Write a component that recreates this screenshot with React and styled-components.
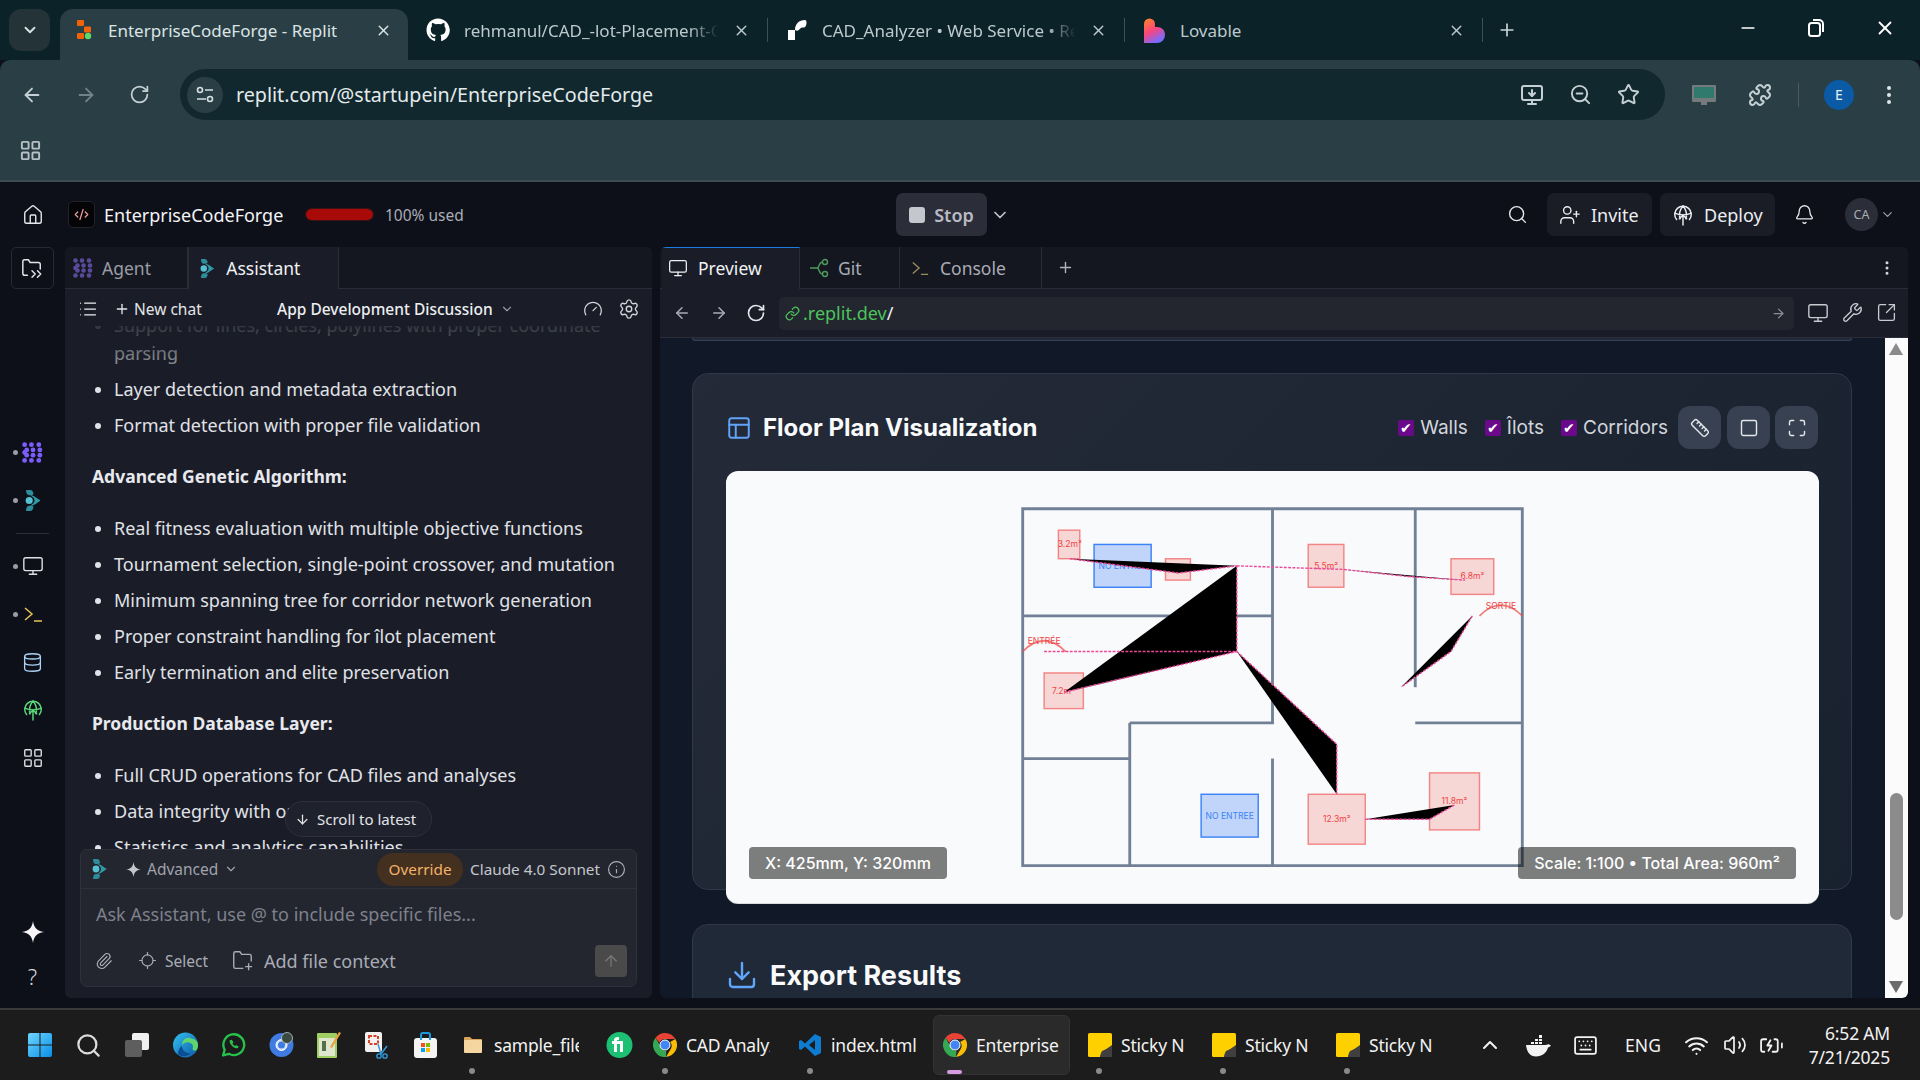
import React from "react";
import styled, { createGlobalStyle } from "styled-components";
import {
  ArrowLeft, ArrowRight, ArrowDown, ArrowUp, RotateCw, Search, ZoomOut, Star, EllipsisVertical, LayoutGrid, X, Plus, Minus,
  ChevronDown, ChevronUp, House, Monitor, Database, Bell, UserPlus, List, Gauge, Settings, Link, Wrench, SquareArrowOutUpRight,
  Ruler, Square, Maximize, PanelsTopLeft, Download, Paperclip, Locate, Info, Keyboard, Wifi, Volume2, Puzzle, CodeXml, MonitorDown, BatteryCharging,
} from "lucide-react";

const Global = createGlobalStyle`
  html, body { margin: 0; padding: 0; width: 1920px; height: 1080px; overflow: hidden; background: #0e1019; }
  * { box-sizing: border-box; }
  #root { width: 1920px; height: 1080px; }
`;

const Screen = styled.div`
  width: 1920px; height: 1080px; display: flex; flex-direction: column; overflow: hidden;
  font-family: "Noto Sans", sans-serif;
`;

/* ---------- browser chrome ---------- */
const TabStrip = styled.div`
  height: 60px; background: #0b2228; display: flex; align-items: flex-end; padding-left: 9px; position: relative; flex: none;
`;
const TabMenu = styled.div`
  width: 41px; height: 42px; margin: 0 10px 9px 0; border-radius: 12px; background: #233338; color: #d7e0e2;
  display: flex; align-items: center; justify-content: center;
`;
const Tab = styled.div`
  width: ${p => p.$w}px; height: 51px; display: flex; align-items: center; flex: none;
  padding: 0 ${p => p.$active ? 16 : 18}px 9px ${p => p.$active ? 17 : 18}px;
  gap: ${p => p.$active ? 16 : 14}px;
  color: ${p => p.$active ? "#dbe4e6" : "#bccacd"};
  background: ${p => p.$active ? "#2a3f45" : "transparent"};
  border-radius: 13px 13px 0 0;
  position: relative;
  ${p => p.$sep && `&::after { content: ""; position: absolute; right: 0; top: 9px; height: 24px; width: 1px; background: #3b5057; }`}
`;
const TabTitle = styled.div`
  flex: 1; min-width: 0; white-space: nowrap; overflow: hidden; font-size: 17px;
  ${p => p.$fade && `-webkit-mask-image: linear-gradient(90deg, #000 88%, transparent 100%); mask-image: linear-gradient(90deg, #000 88%, transparent 100%);`}
`;
const NewTab = styled.div`
  color: #c9d5d8; margin: 0 0 9px 14px; height: 42px; display: flex; align-items: center;
`;
const WindowControls = styled.div`
  margin-left: auto; display: flex; height: 60px; align-items: center; color: #fff; padding: 0 24px 0 0; gap: 50px; transform: translateY(-2px);
`;
const Toolbar = styled.div`
  height: 122px; background: #2a3f45; flex: none; border-radius: 10px 10px 0 0; border-bottom: 2px solid #3d4c52;
  display: flex; flex-direction: column;
`;
const NavRow = styled.div`
  height: 51px; margin-top: 9px; display: flex; align-items: center; padding: 0 0 0 21px; color: #c4d0d3;
`;
const NavBtn = styled.div`
  width: ${p => p.$w || 54}px; flex: none; display: flex; justify-content: ${p => p.$left ? "flex-start" : "center"};
  color: ${p => p.$dim ? "#6f8388" : "inherit"};
`;
const UrlPill = styled.div`
  width: 1485px; height: 51px; margin-left: 18px; flex: none; border-radius: 26px; background: #11282e; display: flex; align-items: center; padding: 0 25px 0 7px;
`;
const SiteBadge = styled.div`
  width: 36px; height: 36px; border-radius: 50%; background: #2a3f45; display: flex; align-items: center; justify-content: center; color: #d5dfe1; flex: none;
`;
const UrlText = styled.div`
  margin-left: 13px; font-size: 19.700px; color: #e3eaec; white-space: nowrap; flex: 1;
`;
const UrlIcons = styled.div`
  display: flex; gap: 25px; align-items: center; color: #c4d0d3;
`;
const ToolIcons = styled.div`
  display: flex; align-items: center; margin-left: 27px;
`;
const ToolGap = styled.span`
  width: ${p => p.$w}px; flex: none;
`;
const ToolSep = styled.div`
  width: 1px; height: 24px; background: #4a5c62; margin: 0 25px 0 26px;
`;
const ChromeAvatar = styled.div`
  width: 30px; height: 30px; border-radius: 50%; background: #0a5aa5; color: #e8f1f8; font-size: 14px; display: flex; align-items: center; justify-content: center;
`;
const BookmarkRow = styled.div`
  flex: 1; display: flex; align-items: center; padding: 0 0 0 19px; color: #b5c1c4;
`;

/* ---------- replit ---------- */
const App_ = styled.div`
  flex: 1; min-height: 0; display: flex; flex-direction: column; background: #0e1019;
`;
const Header = styled.header`
  height: 65px; flex: none; display: flex; align-items: center; position: relative; color: #f0f1f4;
`;
const HomeSlot = styled.div`
  width: 68px; flex: none; display: flex; justify-content: center; color: #e6e7eb; padding-right: 3px;
`;
const LogoBox = styled.div`
  width: 27px; height: 27px; border-radius: 5px; background: #050507; border: 1px solid #22242c; display: flex; align-items: center; justify-content: center; color: #ef9a9a;
`;
const ProjectName = styled.div`
  margin-left: 9px; font-size: 18px; color: #f3f4f6; white-space: nowrap; width: 202px;
`;
const UsageBar = styled.div`
  width: 67px; height: 11px; border-radius: 6px; background: #a80a0a; outline: 1px solid #3a1315;
`;
const UsageText = styled.div`
  margin-left: 12px; font-size: 15.500px; color: #a9acb6; width: 511px; white-space: nowrap;
`;
const StopBtn = styled.div`
  width: 91px; height: 43px; border-radius: 7px; background: #2b2d38; display: flex; align-items: center; justify-content: center; gap: 9px; color: #b9bbc4; font-size: 18px; font-weight: 600;
`;
const StopSquare = styled.div`
  width: 16px; height: 16px; border-radius: 3px; background: #c5c7ce;
`;
const HeadChevron = styled.div`
  margin-left: 3px; color: #c5c7ce; display: flex;
`;
const HeadRight = styled.div`
  margin-left: auto; display: flex; align-items: center; padding-right: 25px;
`;
const HeadBtn = styled.div`
  height: 43px; border-radius: 7px; background: #1a1c26; display: flex; align-items: center; gap: 10px; padding: 0 12px; font-size: 18px; color: #eceef2; margin-left: ${p => p.$ml}px; width: ${p => p.$w}px;
`;
const HeadIcon = styled.div`
  color: #e5e6ea; display: flex; margin-left: ${p => p.$ml || 0}px;
`;
const UserAvatar = styled.div`
  width: 33px; height: 33px; border-radius: 50%; background: #2b2d38; color: #a9acb6; font-size: 12.500px; display: flex; align-items: center; justify-content: center; margin-left: 30px;
`;
const Body = styled.div`
  flex: 1; min-height: 0; display: flex; padding: 0 12px 10px 0;
`;
const Rail = styled.nav`
  width: 65px; flex: none; display: flex; flex-direction: column; align-items: center;
`;
const RailBox = styled.div`
  width: 43px; height: 42px; border: 1px solid #262933; border-radius: 5px; color: #e4e5ea; display: flex; align-items: center; justify-content: center; margin: 0 0 139px -1px;
`;
const RailSlot = styled.div`
  height: ${p => p.$h || 48}px; width: 65px; display: flex; align-items: center; justify-content: center; position: relative; color: ${p => p.$c || "#dfe1e6"};
  ${p => p.$dot && `&::before { content: ""; position: absolute; left: 13px; top: 50%; margin-top: -2px; width: 5px; height: 5px; border-radius: 50%; background: #9a9ca6; }`}
`;
const RailDivider = styled.div`
  width: 33px; height: 1px; background: #2a2c36; margin: 9px 0 8px;
`;
const RailSpacer = styled.div`
  flex: 1;
`;
const HelpMark = styled.span`
  font-size: 22px; font-weight: 300;
`;
const ChatPanel = styled.section`
  width: 587px; flex: none; display: flex; flex-direction: column; background: #1a1d27; border-radius: 6px; overflow: hidden; position: relative;
`;
const TabRow = styled.div`
  height: 42px; flex: none; display: flex; background: #151720; border-bottom: 1px solid #2a2d38; 
`;
const ChatTab = styled.div`
  width: ${p => p.$w}px; height: 42px; display: flex; align-items: center; gap: ${p => p.$gap || 9}px; padding-left: ${p => p.$pl || 8}px; font-size: 17.500px; flex: none;
  color: ${p => p.$active ? "#f0f1f4" : "#9a9ca6"};
  background: ${p => p.$active ? "#1a1d27" : "transparent"};
  border-right: 1px solid #2a2d38;
  ${p => p.$active && `border-left: 1px solid #2a2d38;`}
`;
const ChatHead = styled.div`
  height: 37px; flex: none; display: flex; align-items: center; padding: 3px 12px 0 13px; color: #eceef2;
`;
const NewChat = styled.div`
  display: flex; align-items: center; gap: 4px; font-size: 15.500px; margin-left: 16px; width: 163px; white-space: nowrap; color: #e5e6ea;
`;
const Discussion = styled.div`
  display: flex; align-items: center; gap: 7px; font-size: 15.500px; font-weight: 500; flex: 1; white-space: nowrap; color: #eceef2;
`;
const ChatHeadTools = styled.div`
  display: flex; align-items: center; gap: 15px; color: #d5d6dc;
`;
const Messages = styled.div`
  flex: 1; min-height: 0; overflow: hidden; position: relative; color: #e0e2e8; font-size: 18px; line-height: 28px;
  &::after { content: ""; position: absolute; top: 0; left: 0; right: 0; height: 44px; background: linear-gradient(rgba(26,29,39,0.88), rgba(26,29,39,0.35)); }
`;
const MessageList = styled.ul`
  margin: ${p => p.$mt || 0}px 0 0; padding: 0 0 0 49px; list-style: disc; display: flex; flex-direction: column; gap: 8px;
  li { white-space: nowrap; }
`;
const MessageHeading = styled.p`
  margin: 23px 0 24px 27px; font-weight: 700; font-size: 17.500px; color: #e8e9ee;
`;
const ScrollPill = styled.div`
  position: absolute; left: 220px; top: 554px; width: 147px; height: 36px; border-radius: 18px; background: #1f222c; border: 1px solid #2e313c; display: flex; align-items: center; gap: 7px; padding-left: 9px; color: #e4e5ea; font-size: 15px; white-space: nowrap;
`;
const Composer = styled.div`
  flex: none; height: 138px; margin: 0 15px 11px; background: #23262f; border: 1px solid #2e313c; border-radius: 7px; display: flex; flex-direction: column; position: relative;
`;
const ComposerHead = styled.div`
  height: 39px; flex: none; display: flex; align-items: center; border-bottom: 1px solid #2e313c; padding: 0 10px 0 11px;
`;
const ModeLabel = styled.div`
  display: flex; align-items: center; gap: 6px; color: #9fa2ac; font-size: 15.500px; margin-left: 19px; flex: 1;
`;
const OverridePill = styled.div`
  width: 86px; height: 33px; border-radius: 17px; background: #43301e; color: #f5b269; font-size: 15.300px; display: flex; align-items: center; justify-content: center;
`;
const ModelName = styled.div`
  font-size: 15.300px; color: #c5c7ce; margin: 0 7px; white-space: nowrap;
`;
const Placeholder = styled.div`
  padding: 13px 0 0 15px; color: #7e818c; font-size: 18px; height: 54px; white-space: nowrap;
`;
const ComposerFoot = styled.div`
  flex: 1; display: flex; align-items: center; padding: 0 9px 8px 14px; color: #b0b2bb;
`;
const FootAction = styled.div`
  display: flex; align-items: center; gap: ${p => p.$gap}px; margin-left: ${p => p.$ml}px; font-size: ${p => p.$fs}px; white-space: nowrap; color: #a9acb6;
`;
const SendBtn = styled.div`
  margin-left: auto; width: 32px; height: 32px; background: #4a4a4a; border-radius: 4px; color: #7c7c7c; display: flex; align-items: center; justify-content: center;
`;

const PreviewPanel = styled.section`
  width: 1248px; margin-left: 8px; flex: none; display: flex; flex-direction: column; background: #1a1d27; border-radius: 6px; overflow: hidden; 
`;
const PreviewTabs = styled.div`
  height: 42px; flex: none; display: flex; align-items: center; background: #151720; border-bottom: 1px solid #2a2d38; color: #b7b9c2; padding-left: 2px;
`;
const PTab = styled.div`
  width: ${p => p.$w}px; height: 42px; flex: none; display: flex; align-items: center; gap: ${p => p.$gap}px; padding-left: ${p => p.$pl}px; font-size: 17.500px;
  color: ${p => p.$active ? "#f0f1f4" : "#a9acb6"};
  background: ${p => p.$active ? "#1a1d27" : "transparent"};
  border-right: 1px solid #2a2d38;
  ${p => p.$active && `border-top: 1px solid #1d7ae0;`}
`;
const PTabPlus = styled.div`
  margin-left: 15px; color: #b0b2bb; display: flex;
`;
const PTabMenu = styled.div`
  margin-left: auto; padding-right: 12px; color: #d5d6dc; display: flex;
`;
const AddressRow = styled.div`
  height: 49px; flex: none; display: flex; align-items: center; padding: 0 10px 0 3px; border-bottom: 1px solid #2a2d38; color: #a9acb6;
`;
const AddrNav = styled.div`
  width: 37px; flex: none; display: flex; justify-content: center; color: ${p => p.$c || "inherit"};
`;
const AddressBar = styled.div`
  width: 1015px; height: 33px; border-radius: 5px; background: #23262f; display: flex; align-items: center; padding: 0 8px 0 6px; margin-left: 5px; font-size: 18px; color: #4cc35c;
`;
const LinkGlyph = styled.span`
  display: flex; margin-right: 3px;
`;
const Slash = styled.span`
  color: #eceef2; flex: 1;
`;
const AddrTools = styled.div`
  display: flex; gap: 13px; margin-left: 13px; color: #c9cbd2;
`;
const PreviewBody = styled.div`
  flex: 1; min-height: 0; display: flex; background: #111827; font-family: Inter, sans-serif;
`;
const Page = styled.div`
  flex: 1; min-width: 0; overflow: hidden; padding: 0 33px 0 32px;
`;
const PrevCardEdge = styled.div`
  height: 3px; background: #1f2937; border: 1px solid #374151; border-top: 0; border-radius: 0 0 12px 12px; margin: 0 0 32px;
`;
const Card = styled.div`
  background: linear-gradient(135deg, #242a38, #18212e); border: 1px solid #2f3947; border-radius: 16px; padding: 32px 33px 0 33px; height: 517px; margin-bottom: 34px;
`;
const CardHead = styled.div`
  display: flex; align-items: center; height: 43px; margin-bottom: 22px; color: #fff;
`;
const CardTitle = styled.h2`
  margin: 0; font-family: Inter, sans-serif; font-weight: 700; font-size: ${p => p.$fs}px; color: #f9fafb; flex: 1; margin-left: ${p => p.$ml}px; white-space: nowrap;
`;
const TitleIcon = styled.div`
  color: #60a5fa; display: flex;
`;
const Check = styled.label`
  display: flex; align-items: center; gap: 6px; font-size: 19px; color: #d1d5db; margin-right: ${p => p.$mr}px;
`;
const CheckBox = styled.span`
  width: 16px; height: 16px; background: #6a0a8a; border-radius: 2px; color: #fff; font-size: 14px; display: flex; align-items: center; justify-content: center;
`;
const ToolBtn = styled.div`
  width: 43px; height: 43px; border-radius: 12px; background: #374151; color: #e5e7eb; display: flex; align-items: center; justify-content: center; margin-left: ${p => p.$ml || 0}px;
`;
const Canvas = styled.div`
  height: 432px; margin-right: -1px; border-radius: 12px; background: #f9fafb; display: flex; align-items: center; justify-content: center; position: relative; box-shadow: 0 1px 0 #d8dbe0;
`;
const Badge = styled.div`
  position: absolute; bottom: 24px; ${p => p.$side}: 23px; height: 32px; padding: 0 16px; border-radius: 4px; background: rgba(0,0,0,0.5); color: #fff; font-size: 16px; font-weight: 500; display: flex; align-items: center; white-space: nowrap; font-family: Inter, sans-serif;
`;
const ExportCard = styled.div`
  background: #1f2937; border: 1px solid #2f3947; border-radius: 16px 16px 0 0; height: 110px; padding: 34px 33px 0 33px; display: flex; align-items: flex-start;
`;
const Scrollbar = styled.div`
  width: 23px; flex: none; background: #fbfbfb; position: relative; color: #8b8b8b;
`;
const Thumb = styled.div`
  position: absolute; top: 455px; left: 5px; width: 13px; height: 127px; border-radius: 7px; background: #8b8b8b;
`;
const ScrollArrow = styled.div`
  position: absolute; left: 4px; ${p => p.$pos}: 5px; width: 0; height: 0; border-left: 7.500px solid transparent; border-right: 7.500px solid transparent;
  ${p => p.$pos === "top" ? "border-bottom: 12px solid #8b8b8b;" : "border-top: 12px solid #6b6b6b;"}
`;

/* ---------- taskbar ---------- */
const Taskbar = styled.footer`
  height: 72px; flex: none; background: #1c1c1c; border-top: 2px solid #3a3a3a; display: flex; align-items: center; padding-left: 16px; color: #f2f2f2; position: relative;
`;
const TaskIcon = styled.div`
  width: ${p => p.$w || 48}px; flex: none; display: flex; justify-content: center; align-items: center; color: #e5e5e5;
`;
const TaskApp = styled.div`
  width: ${p => p.$w}px; height: 60px; flex: none; display: flex; align-items: center; gap: ${p => p.$gap || 9}px; padding-left: ${p => p.$pl ?? 14}px; position: relative; margin-left: ${p => p.$ml || 0}px; border-radius: 6px;
  ${p => p.$active && `background: #2a2a2a; border: 1px solid #333;`}
  ${p => p.$dot && `&::after { content: ""; position: absolute; bottom: 1px; left: ${p.$dot}px; width: 6px; height: 6px; border-radius: 50%; background: #8a8a8a; }`}
  ${p => p.$active && `&::after { content: ""; position: absolute; bottom: 0px; left: 13px; width: 15px; height: 4px; border-radius: 2px; background: #d59be0; }`}
`;
const TaskLabel = styled.div`
  width: ${p => p.$w}px; overflow: hidden; white-space: nowrap; font-size: 17.500px; letter-spacing: -0.2px;
`;
const Tray = styled.div`
  margin-left: auto; display: flex; align-items: center; padding-right: 30px;
`;
const TraySlot = styled.div`
  width: ${p => p.$w}px; display: flex; justify-content: center; align-items: center; color: #f2f2f2; font-size: 17.500px;
`;
const Clock = styled.div`
  width: 100px; text-align: right; font-size: 17.500px; line-height: 24px; white-space: nowrap; letter-spacing: -0.2px;
`;

/* ---------- drawings ---------- */
const Star4 = ({ size = 22, color = "#f5f5f7" }) => (
  <svg width={size} height={size} viewBox="0 0 24 24" fill={color}><path d="M12 0c1 7 4 11 12 12-8 1-11 5-12 12-1-7-4-11-12-12 8-1 11-5 12-12z" /></svg>
);
const RestoreIcon = () => (
  <svg width="16" height="18" viewBox="0 0 16 18" fill="none" stroke="currentColor" strokeWidth="2"><rect x="1" y="4" width="11" height="13" rx="2.500" /><path d="M5 1h6a4 4 0 0 1 4 4v8" /></svg>
);
const ReplitFav = () => (
  <svg width="15" height="20" viewBox="0 0 15 20">
    <rect x="0" y="0" width="7" height="6" rx="1" fill="#f26207" />
    <rect x="7" y="6.500" width="7" height="6" rx="1" fill="#f26207" />
    <rect x="0" y="13" width="7" height="6" rx="1" fill="#f26207" />
    <circle cx="11" cy="16" r="3.200" fill="#5dd96a" />
  </svg>
);
const GitHubMark = () => (
  <svg width="24" height="24" viewBox="0 0 24 24" fill="#fff"><path d="M12 .5C5.600.5.500 5.600.500 12c0 5.100 3.300 9.400 7.900 10.900.6.100.8-.3.8-.6v-2.100c-3.200.7-3.900-1.400-3.900-1.400-.5-1.300-1.300-1.700-1.300-1.700-1-.7.1-.7.1-.7 1.200.1 1.800 1.200 1.800 1.200 1 1.800 2.700 1.300 3.400 1 .1-.8.4-1.300.7-1.600-2.600-.3-5.200-1.300-5.200-5.700 0-1.300.5-2.300 1.200-3.100-.1-.3-.5-1.500.1-3.100 0 0 1-.3 3.200 1.200a11 11 0 0 1 5.800 0c2.200-1.500 3.200-1.200 3.200-1.200.6 1.600.2 2.800.1 3.100.7.8 1.200 1.800 1.200 3.100 0 4.400-2.700 5.400-5.300 5.700.4.4.8 1.100.8 2.200v3.200c0 .3.2.7.8.6 4.600-1.500 7.900-5.800 7.900-10.900C23.500 5.600 18.400.5 12 .5z" /></svg>
);
const RenderMark = () => (
  <svg width="22" height="24" viewBox="0 0 22 24" fill="#fff"><path d="M2 22V12h7v10H2zM9 12C9 6 13 2 19 2c2 0 2 5 0 7-1 1-3 0-4 1-2 1-2 4-6 2z" /></svg>
);
const LovableMark = () => (
  <svg width="23" height="25" viewBox="0 0 23 25">
    <defs><linearGradient id="lv" x1="0" y1="0" x2="0.5" y2="1"><stop offset="0" stopColor="#ff8a1f" /><stop offset="0.55" stopColor="#f9457f" /><stop offset="1" stopColor="#7a6bff" /></linearGradient></defs>
    <path d="M1 6a5.500 5.500 0 0 1 11 0v3h3a7.500 7.500 0 0 1 7 8 8 8 0 0 1-8 8H1z" fill="url(#lv)" />
  </svg>
);
const AgentMark = ({ size = 20, color = "#7c5cfc" }) => (
  <svg width={size} height={size} viewBox="0 0 20 20" fill={color}>
    {[[2.500,2.500],[9,2.500],[16,2.500],[4.500,7.500],[10.500,7.500],[17,7.500],[2.500,10],[4.500,12.500],[10.500,12.500],[17,12.500],[2.500,17.500],[9,17.500],[16,17.500]].map(([x,y],i) => <circle key={i} cx={x} cy={y} r="2.300" />)}
  </svg>
);
const AssistMark = ({ size = 20 }) => (
  <svg width={size * 0.75} height={size} viewBox="0 0 15 20">
    <path d="M1 0h4c2 0 3 2 3 4 0 1-3 1-4 1-2 0-3-2-3-5z" fill="#2f8c9b" />
    <path d="M1 20h4c2 0 3-2 3-4 0-1-3-1-4-1-2 0-3 2-3 5z" fill="#2f8c9b" />
    <path d="M5 5c4 0 6 3 10 5-4 2-6 5-10 5 3-2 4-3 4-5s-1-3-4-5z" fill="#2f9aa6" />
    <circle cx="4" cy="10" r="3.400" fill="#56c1d0" />
  </svg>
);
const FolderGo = () => (
  <svg width="22" height="22" viewBox="0 0 24 24" fill="none" stroke="currentColor" strokeWidth="1.600" strokeLinecap="round" strokeLinejoin="round">
    <path d="M7 20H4a2 2 0 0 1-2-2V5a2 2 0 0 1 2-2h4l2 3h9a2 2 0 0 1 2 2v5" /><path d="m12 15 3.500 3.500L12 22M18 15l3.500 3.500L18 22" />
  </svg>
);
const TermMark = ({ size = 20, color = "#e6c45b" }) => (
  <svg width={size} height={size} viewBox="0 0 20 20" fill="none" stroke={color} strokeWidth="1.500"><path d="m2 4 7 6-7 6M11 17h8" /></svg>
);
const DeployMark = ({ size = 22, color = "currentColor" }) => (
  <svg width={size} height={size} viewBox="0 0 24 24" fill="none" stroke={color} strokeWidth="1.600" strokeLinecap="round">
    <path d="M5 17A9 9 0 1 1 19 17" /><path d="M3 10c5 2.500 13 2.500 18 0M9 16c-2-5-1-9 3-14 4 5 5 9 3 14" /><path d="M12 23V12M8 16l4-4 4 4" />
  </svg>
);
const GitMark = () => (
  <svg width="20" height="20" viewBox="0 0 20 20" fill="none" stroke="#4c9a5c" strokeWidth="1.400"><path d="M1 10h7M8 10c3 0 1-6 6-6M8 10c3 0 1 6 6 6" /><circle cx="16" cy="4" r="2.500" /><circle cx="16" cy="16" r="2.500" /></svg>
);
const FolderStar = () => (
  <svg width="21" height="21" viewBox="0 0 24 24" fill="none" stroke="currentColor" strokeWidth="1.600" strokeLinejoin="round"><path d="M13 21H4a2 2 0 0 1-2-2V4a2 2 0 0 1 2-2h5l2 3h9a2 2 0 0 1 2 2v6" /><path d="M19 15v8M15 19h8" /></svg>
);
const WinLogo = () => (
  <svg width="24" height="24" viewBox="0 0 24 24"><defs><linearGradient id="wn" x1="0" y1="0" x2="1" y2="1"><stop offset="0" stopColor="#6fd6ff" /><stop offset="1" stopColor="#0a8ee6" /></linearGradient></defs>
    <path fill="url(#wn)" d="M0 2a2 2 0 0 1 2-2h9.500v11.500H0zM12.500 0H22a2 2 0 0 1 2 2v9.500H12.500zM0 12.500h11.500V24H2a2 2 0 0 1-2-2zM12.500 12.500H24V22a2 2 0 0 1-2 2h-9.500z" /></svg>
);
const TaskView = () => (
  <svg width="25" height="24" viewBox="0 0 25 24"><rect x="7" y="0" width="17" height="17" rx="2" fill="#f0f0f0" /><rect x="0" y="7" width="17" height="17" rx="2" fill="#5e5e5e" /></svg>
);
const Edge = () => (
  <svg width="25" height="26" viewBox="0 0 25 26"><defs><linearGradient id="ed" x1="0" y1="0" x2="1" y2="1"><stop offset="0" stopColor="#35c1f1" /><stop offset="1" stopColor="#0c59a4" /></linearGradient></defs>
    <circle cx="12.500" cy="13" r="12.500" fill="url(#ed)" /><path d="M25 13c0 4-2 7-5 5-1-1 1-4-1-6-3-3-8-2-10 1 0-5 4-8 8-7 5 1 8 3 8 7z" fill="#5fd66d" /><path d="M9 14c0 5 5 8 9 7-3 3-9 5-13 1 0-4 2-7 4-8z" fill="#0a4e94" /></svg>
);
const WhatsApp = () => (
  <svg width="25" height="26" viewBox="0 0 24 24" fill="none" stroke="#27c24c" strokeWidth="2.200" strokeLinejoin="round"><path d="M2 22l1.500-5.500A10 10 0 1 1 7.500 20.500z" /><path d="M8.500 7.500c-1.500 3 4.500 9 7.500 7.500l1-1.500-2.500-1.500-1 1c-1-.5-2-1.500-2.500-2.500l1-1-1.500-2.500z" fill="#27c24c" stroke="none" /></svg>
);
const ChromeLogo = ({ size = 24 }) => (
  <svg width={size} height={size} viewBox="0 0 24 24">
    <path d="M12 0a12 12 0 0 1 10.400 6H12a6 6 0 0 0-5.600 3.800L2.500 4.800A12 12 0 0 1 12 0z" fill="#ea4335" />
    <path d="M22.400 6A12 12 0 0 1 13 24l5-8.500A6 6 0 0 0 17.200 9z" fill="#fbbc04" />
    <path d="M13 24A12 12 0 0 1 2.500 4.800l5 8.700a6 6 0 0 0 5.800 4.500z" fill="#34a853" />
    <circle cx="12" cy="12" r="5" fill="#4285f4" stroke="#fff" strokeWidth="1" />
  </svg>
);
const ProfileChrome = () => (
  <svg width="25" height="26" viewBox="0 0 25 26"><circle cx="12.500" cy="13" r="12" fill="#3f7be0" /><circle cx="12.500" cy="13" r="5.500" fill="#cfe0fa" stroke="#fff" /><circle cx="12.500" cy="13" r="3.500" fill="#3f7be0" /><circle cx="18" cy="6" r="5.500" fill="#3a4a3f" stroke="#bcd" strokeWidth=".8" /></svg>
);
const Notepad = () => (
  <svg width="24" height="26" viewBox="0 0 24 26"><rect x="0" y="1" width="20" height="25" rx="1" fill="#9fce63" /><rect x="2" y="6" width="16" height="18" fill="#dfe8cf" /><path d="M5 9h4v10H5z" fill="#56704a" /><path d="M22 0l2 1-9 15-2-1z" fill="#e8a33d" /></svg>
);
const Snip = () => (
  <svg width="24" height="27" viewBox="0 0 24 27" fill="none"><rect x="0" y="0" width="17" height="20" rx="2" fill="#f1f1f1" /><path d="M4 4h9v8H4z" stroke="#d9412b" strokeWidth="2" strokeDasharray="3 1.500" /><path d="M13 12l3 10M22 14l-6 8" stroke="#2e9ee0" strokeWidth="1.500" /><circle cx="14" cy="24" r="2.200" stroke="#2e9ee0" strokeWidth="1.300" /><circle cx="20" cy="24" r="2.200" stroke="#2e9ee0" strokeWidth="1.300" /></svg>
);
const Store = () => (
  <svg width="23" height="26" viewBox="0 0 23 26"><rect x="0" y="6" width="23" height="20" rx="3" fill="#f4f4f4" /><path d="M7 8V3a2 2 0 0 1 2-2h5a2 2 0 0 1 2 2v5" fill="none" stroke="#1a9be0" strokeWidth="2" /><rect x="7" y="11" width="4" height="4" fill="#f25022" /><rect x="12" y="11" width="4" height="4" fill="#7fba00" /><rect x="7" y="16" width="4" height="4" fill="#00a4ef" /><rect x="12" y="16" width="4" height="4" fill="#ffb900" /></svg>
);
const FolderIco = () => (
  <svg width="20" height="20" viewBox="0 0 20 20"><path d="M1 3a1 1 0 0 1 1-1h5l2 2h9a1 1 0 0 1 1 1v1H1z" fill="#d8a458" /><rect x="1" y="5" width="18" height="13" rx="1" fill="#f6d6a0" /></svg>
);
const Fiverr = () => (
  <svg width="27" height="26" viewBox="0 0 27 26"><circle cx="13.500" cy="13" r="13" fill="#1dbf73" /><path d="M8 20v-8H6V9h2V8c0-2 1.500-3 3.500-3h1.500v3h-1c-.8 0-1 .3-1 1h6v11h-3v-8h-3v8z" fill="#fff" /></svg>
);
const VSCode = () => (
  <svg width="24" height="26" viewBox="0 0 24 24"><path d="M17 1l6 3v16l-6 3L7 13.500 3 17l-2-1V8l2-1 4 3.500z" fill="#0e7dd1" /><path d="M17 7l-6 5 6 5z" fill="#1c1c1c" /></svg>
);
const StickyIco = () => (
  <svg width="24" height="24" viewBox="0 0 24 24"><rect x="0" y="0" width="24" height="24" rx="1.500" fill="#ffd000" /><path d="M24 12v12H12c0-2 1-4 2-6 3-1 6-3 10-6z" fill="#3f3f3f" /></svg>
);
const Docker = () => (
  <svg width="26" height="24" viewBox="0 0 26 24" fill="#f2f2f2"><path d="M1 12h20c1 0 2-1 3-.5 1 .5 2 1 2 1-1 1-2 2-3 2-1 5-6 9-12 9-6 0-9-4-10-11.500z" /><path d="M6 9h3v2H6zM10 9h3v2h-3zM14 9h3v2h-3zM10 6h3v2h-3zM14 6h3v2h-3zM14 2h3v3h-3z" /></svg>
);

const C = { wall: "#718096", pink: "#ec4899" };
const Ilot = ({ x, y, w, h, label, blue, tx, ty }) => (
  <g>
    <rect x={x} y={y} width={w} height={h} fill={blue ? "#3b82f6" : "#ef4444"} fillOpacity={blue ? 0.3 : 0.2} stroke={blue ? "#3b82f6" : "#ef4444"} strokeOpacity={blue ? 1 : 0.6} strokeWidth="2" />
    <text x={tx ?? x + w / 2} y={ty ?? y + h / 2 + 4} textAnchor="middle" fontFamily="Inter, sans-serif" fontSize={blue ? 12 : 12} fill={blue ? "#3b82f6" : "#ef4444"}>{label}</text>
  </g>
);
const walls = [
  "M50 50h700v500H50z", "M50 200h350", "M400 50v300", "M402 350H200", "M200 350v200", "M50 400h150", "M400 400v150", "M600 50v250", "M600 350h150",
];
const corridors = [
  "116,120 268,140 350,130", "108,307 350,250 350,130", "500,135 590,145 670,150", "350,250 490,380 490,450", "530,485 620,485 655,465", "680,200 650,250 580,300",
];
const FloorPlan = () => (
  <svg width="571" height="428.400" viewBox="0 0 800 600">
    {walls.map(d => <path key={d} d={d} fill="none" stroke={C.wall} strokeWidth="4" />)}
    <Ilot x={100} y={80} w={30} h={40} label="3.2m²" tx={116} ty={103} />
    <Ilot x={150} y={100} w={80} h={60} label="NO ENTREE" blue />
    <Ilot x={250} y={120} w={35} h={30} label="" />
    <Ilot x={450} y={100} w={50} h={60} label="5.5m²" />
    <Ilot x={650} y={120} w={60} h={50} label="6.8m²" tx={680} />
    <Ilot x={80} y={280} w={55} h={50} label="7.2m²" tx={107} />
    <Ilot x={300} y={450} w={80} h={60} label="NO ENTREE" blue />
    <Ilot x={450} y={450} w={80} h={70} label="12.3m²" tx={490} ty={489} />
    <Ilot x={620} y={420} w={70} h={80} label="11.8m²" tx={655} ty={464} />
    {corridors.map(p => <polyline key={p} points={p} fill="#000" stroke={C.pink} strokeWidth="2" strokeDasharray="4 2" />)}
    <polyline points="350,130 500,135" fill="none" stroke={C.pink} strokeWidth="2" strokeDasharray="4 2" />
    <polyline points="80,250 350,250" fill="none" stroke={C.pink} strokeWidth="2" strokeDasharray="4 2" />
    <path d="M50 250Q80 220 110 250M690 200Q720 170 750 200" fill="none" stroke="#ef4444" strokeOpacity="0.7" strokeWidth="2.500" />
    <text x="80" y="240" textAnchor="middle" fontFamily="Inter, sans-serif" fontSize="12" fill="#ef4444">ENTRÉE</text>
    <text x="720" y="190" textAnchor="middle" fontFamily="Inter, sans-serif" fontSize="12" fill="#ef4444">SORTIE</text>
  </svg>
);

const tc = (n) => <X size={n} strokeWidth={2} />;

export default function App() {
  return (
    <Screen>
      <Global />
      <TabStrip>
        <TabMenu><ChevronDown size={18} strokeWidth={2.500} /></TabMenu>
        <Tab $active $w={348}><ReplitFav /><TabTitle>EnterpriseCodeForge - Replit</TabTitle>{tc(17)}</Tab>
        <Tab $w={360} $sep><GitHubMark /><TabTitle $fade>rehmanul/CAD_-lot-Placement-OCR</TabTitle>{tc(17)}</Tab>
        <Tab $w={357} $sep><RenderMark /><TabTitle $fade>CAD_Analyzer • Web Service • Render</TabTitle>{tc(17)}</Tab>
        <Tab $w={358} $sep><LovableMark /><TabTitle>Lovable</TabTitle>{tc(17)}</Tab>
        <NewTab><Plus size={20} /></NewTab>
        <WindowControls><Minus size={20} /><RestoreIcon /><X size={22} /></WindowControls>
      </TabStrip>
      <Toolbar>
        <NavRow>
          <NavBtn $w={54} $left><ArrowLeft size={22} /></NavBtn>
          <NavBtn $w={54} $left $dim><ArrowRight size={22} /></NavBtn>
          <NavBtn $w={33} $left><RotateCw size={21} /></NavBtn>
          <UrlPill>
            <SiteBadge><svg width="20" height="20" viewBox="0 0 20 20" fill="none" stroke="currentColor" strokeWidth="1.600"><circle cx="5" cy="5" r="2.500" /><path d="M10 5h8M2 14h9" /><circle cx="15" cy="14" r="2.500" /></svg></SiteBadge>
            <UrlText>replit.com/@startupein/EnterpriseCodeForge</UrlText>
            <UrlIcons><MonitorDown size={24} /><ZoomOut size={23} /><Star size={23} /></UrlIcons>
          </UrlPill>
          <ToolIcons>
            <svg width="24" height="24" viewBox="0 0 24 24"><rect x="0" y="2" width="24" height="17" rx="1" fill="#757b7d" /><rect x="2" y="4" width="20" height="11" fill="#2f7a6c" /><rect x="9" y="19" width="6" height="3" fill="#757b7d" /></svg>
            <ToolGap $w={32} />
            <Puzzle size={24} />
            <ToolSep />
            <ChromeAvatar>E</ChromeAvatar>
            <ToolGap $w={23} />
            <EllipsisVertical size={24} color="#dfe6e8" />
          </ToolIcons>
        </NavRow>
        <BookmarkRow><LayoutGrid size={23} /></BookmarkRow>
      </Toolbar>

      <App_>
        <Header>
          <HomeSlot><House size={22} strokeWidth={1.500} /></HomeSlot>
          <LogoBox><CodeXml size={15} /></LogoBox>
          <ProjectName>EnterpriseCodeForge</ProjectName>
          <UsageBar />
          <UsageText>100% used</UsageText>
          <StopBtn><StopSquare />Stop</StopBtn>
          <HeadChevron><ChevronDown size={20} /></HeadChevron>
          <HeadRight>
            <HeadIcon><Search size={21} strokeWidth={1.600} /></HeadIcon>
            <HeadBtn $ml={19} $w={105}><UserPlus size={22} strokeWidth={1.500} />Invite</HeadBtn>
            <HeadBtn $ml={8} $w={115}><DeployMark size={22} />Deploy</HeadBtn>
            <HeadIcon $ml={19}><Bell size={21} strokeWidth={1.500} /></HeadIcon>
            <UserAvatar>CA</UserAvatar>
            <HeadIcon $ml={2}><ChevronDown size={15} color="#9a9ca6" /></HeadIcon>
          </HeadRight>
        </Header>
        <Body>
          <Rail>
            <RailBox><FolderGo /></RailBox>
            <RailSlot $dot><AgentMark size={21} /></RailSlot>
            <RailSlot $dot><AssistMark size={21} /></RailSlot>
            <RailDivider />
            <RailSlot $dot><Monitor size={22} strokeWidth={1.500} /></RailSlot>
            <RailSlot $dot><TermMark /></RailSlot>
            <RailSlot $c="#a9d2f5"><Database size={21} strokeWidth={1.500} /></RailSlot>
            <RailSlot $c="#5ad97a"><DeployMark size={22} /></RailSlot>
            <RailSlot><LayoutGrid size={22} strokeWidth={1.500} /></RailSlot>
            <RailSpacer />
            <RailSlot $h={44}><Star4 /></RailSlot>
            <RailSlot $h={44} $c="#d5d6dc"><HelpMark>?</HelpMark></RailSlot>
          </Rail>

          <ChatPanel>
            <TabRow>
              <ChatTab $w={123}><AgentMark size={20} color="#5a4a9c" />Agent</ChatTab>
              <ChatTab $w={151} $active $pl={11} $gap={12}><AssistMark size={19} />Assistant</ChatTab>
            </TabRow>
            <ChatHead>
              <List size={20} strokeWidth={1.500} />
              <NewChat><Plus size={16} />New chat</NewChat>
              <Discussion>App Development Discussion<ChevronDown size={14} color="#9a9ca6" /></Discussion>
              <ChatHeadTools><Gauge size={20} strokeWidth={1.500} /><Settings size={22} strokeWidth={1.500} /></ChatHeadTools>
            </ChatHead>
            <Messages>
              <MessageList $mt={-15}>
                <li>Support for lines, circles, polylines with proper coordinate<br />parsing</li>
                <li>Layer detection and metadata extraction</li>
                <li>Format detection with proper file validation</li>
              </MessageList>
              <MessageHeading>Advanced Genetic Algorithm:</MessageHeading>
              <MessageList>
                <li>Real fitness evaluation with multiple objective functions</li>
                <li>Tournament selection, single-point crossover, and mutation</li>
                <li>Minimum spanning tree for corridor network generation</li>
                <li>Proper constraint handling for îlot placement</li>
                <li>Early termination and elite preservation</li>
              </MessageList>
              <MessageHeading>Production Database Layer:</MessageHeading>
              <MessageList>
                <li>Full CRUD operations for CAD files and analyses</li>
                <li>Data integrity with or</li>
                <li>Statistics and analytics capabilities</li>
              </MessageList>
            </Messages>
            <ScrollPill><ArrowDown size={15} />Scroll to latest</ScrollPill>
            <Composer>
              <ComposerHead>
                <AssistMark size={20} />
                <ModeLabel><Star4 size={15} color="#c5c7ce" />Advanced<ChevronDown size={14} /></ModeLabel>
                <OverridePill>Override</OverridePill>
                <ModelName>Claude 4.0 Sonnet</ModelName>
                <Info size={19} color="#a9acb6" strokeWidth={1.500} />
              </ComposerHead>
              <Placeholder>Ask Assistant, use @ to include specific files...</Placeholder>
              <ComposerFoot>
                <Paperclip size={18} strokeWidth={1.500} />
                <FootAction $ml={25} $gap={8} $fs={15.500}><Locate size={19} strokeWidth={1.500} />Select</FootAction>
                <FootAction $ml={24} $gap={11} $fs={18}><FolderStar />Add file context</FootAction>
                <SendBtn><ArrowUp size={18} strokeWidth={1.500} /></SendBtn>
              </ComposerFoot>
            </Composer>
          </ChatPanel>

          <PreviewPanel>
            <PreviewTabs>
              <PTab $active $w={138} $pl={6} $gap={10}><Monitor size={20} strokeWidth={1.500} />Preview</PTab>
              <PTab $w={100} $pl={9} $gap={9}><GitMark />Git</PTab>
              <PTab $w={142} $pl={11} $gap={11}><TermMark size={18} color="#9c8b5c" />Console</PTab>
              <PTabPlus><Plus size={17} /></PTabPlus>
              <PTabMenu><EllipsisVertical size={18} /></PTabMenu>
            </PreviewTabs>
            <AddressRow>
              <AddrNav><ArrowLeft size={18} /></AddrNav>
              <AddrNav><ArrowRight size={18} /></AddrNav>
              <AddrNav $c="#e4e5ea"><RotateCw size={20} /></AddrNav>
              <AddressBar>
                <LinkGlyph><Link size={15} /></LinkGlyph>.replit.dev<Slash>/</Slash><ArrowRight size={15} color="#8a8c96" />
              </AddressBar>
              <AddrTools><Monitor size={22} strokeWidth={1.500} /><Wrench size={21} strokeWidth={1.500} /><SquareArrowOutUpRight size={21} strokeWidth={1.500} /></AddrTools>
            </AddressRow>
            <PreviewBody>
              <Page>
                <PrevCardEdge />
                <Card>
                  <CardHead>
                    <TitleIcon><PanelsTopLeft size={26} strokeWidth={1.800} /></TitleIcon>
                    <CardTitle $ml={11} $fs={24}>Floor Plan Visualization</CardTitle>
                    <Check $mr={17}><CheckBox>✔</CheckBox>Walls</Check>
                    <Check $mr={17}><CheckBox>✔</CheckBox>Îlots</Check>
                    <Check $mr={10}><CheckBox>✔</CheckBox>Corridors</Check>
                    <ToolBtn><Ruler size={20} strokeWidth={1.700} /></ToolBtn>
                    <ToolBtn $ml={6}><Square size={20} strokeWidth={1.700} /></ToolBtn>
                    <ToolBtn $ml={5}><Maximize size={20} strokeWidth={1.700} /></ToolBtn>
                  </CardHead>
                  <Canvas>
                    <FloorPlan />
                    <Badge $side="left">X: 425mm, Y: 320mm</Badge>
                    <Badge $side="right">Scale: 1:100 • Total Area: 960m²</Badge>
                  </Canvas>
                </Card>
                <ExportCard>
                  <TitleIcon><Download size={32} strokeWidth={1.800} /></TitleIcon>
                  <CardTitle $ml={12} $fs={27}>Export Results</CardTitle>
                </ExportCard>
              </Page>
              <Scrollbar>
                <ScrollArrow $pos="top" />
                <Thumb />
                <ScrollArrow $pos="bottom" />
              </Scrollbar>
            </PreviewBody>
          </PreviewPanel>
        </Body>
      </App_>

      <Taskbar>
        <TaskIcon><WinLogo /></TaskIcon>
        <TaskIcon $w={49}><Search size={27} strokeWidth={2} color="#dcdcdc" /></TaskIcon>
        <TaskIcon><TaskView /></TaskIcon>
        <TaskIcon><Edge /></TaskIcon>
        <TaskIcon><WhatsApp /></TaskIcon>
        <TaskIcon><ProfileChrome /></TaskIcon>
        <TaskIcon><Notepad /></TaskIcon>
        <TaskIcon><Snip /></TaskIcon>
        <TaskIcon><Store /></TaskIcon>
        <TaskApp $w={146} $dot={20} $gap={11}><FolderIco /><TaskLabel $w={85}>sample_files</TaskLabel></TaskApp>
        <TaskIcon $w={48}><Fiverr /></TaskIcon>
        <TaskApp $w={145} $pl={10} $dot={19}><ChromeLogo /><TaskLabel $w={84}>CAD Analyzer</TaskLabel></TaskApp>
        <TaskApp $w={145} $pl={10} $dot={19}><VSCode /><TaskLabel $w={86}>index.html</TaskLabel></TaskApp>
        <TaskApp $w={137} $pl={9} $active><ChromeLogo /><TaskLabel $w={83}>EnterpriseCodeForge</TaskLabel></TaskApp>
        <TaskApp $w={124} $dot={23} $pl={15} $ml={3}><StickyIco /><TaskLabel $w={64}>Sticky N</TaskLabel></TaskApp>
        <TaskApp $w={124} $dot={23} $pl={15}><StickyIco /><TaskLabel $w={64}>Sticky N</TaskLabel></TaskApp>
        <TaskApp $w={124} $dot={23} $pl={15}><StickyIco /><TaskLabel $w={64}>Sticky N</TaskLabel></TaskApp>
        <Tray>
          <TraySlot $w={48}><ChevronUp size={24} /></TraySlot>
          <TraySlot $w={48}><Docker /></TraySlot>
          <TraySlot $w={47}><Keyboard size={25} strokeWidth={1.700} /></TraySlot>
          <TraySlot $w={68}>ENG</TraySlot>
          <TraySlot $w={39}><Wifi size={25} /></TraySlot>
          <TraySlot $w={37}><Volume2 size={24} strokeWidth={1.700} /></TraySlot>
          <TraySlot $w={37}><BatteryCharging size={25} strokeWidth={1.700} /></TraySlot>
          <Clock>6:52 AM<br />7/21/2025</Clock>
        </Tray>
      </Taskbar>
    </Screen>
  );
}
